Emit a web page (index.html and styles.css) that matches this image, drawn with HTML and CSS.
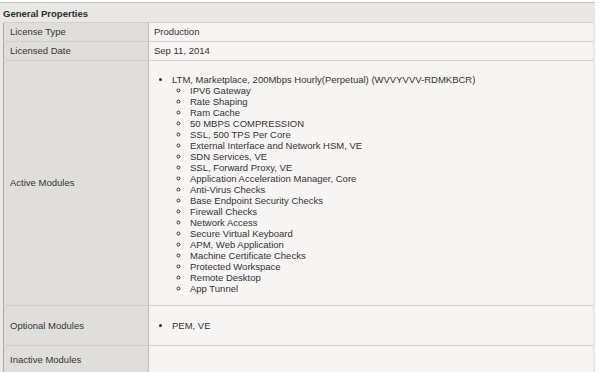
FILE: index.html
```html
<!DOCTYPE html>
<html lang="en">
  <head>
    <meta charset="UTF-8" />
    <title>General Properties</title>
    <link rel="stylesheet" href="styles.css">
  </head>
  <body>
    <div class="panel">
      <div class="panel-title">General Properties</div>
      <table class="props">
        <tr class="row-short">
          <td class="label">License Type</td>
          <td class="value">Production</td>
        </tr>
        <tr class="row-short">
          <td class="label">Licensed Date</td>
          <td class="value">Sep 11, 2014</td>
        </tr>
        <tr>
          <td class="label">Active Modules</td>
          <td class="value">
            <ul class="modules">
              <li>LTM, Marketplace, 200Mbps Hourly(Perpetual) (WVVYVVV-RDMKBCR)
                <ul>
                  <li>IPV6 Gateway</li>
                  <li>Rate Shaping</li>
                  <li>Ram Cache</li>
                  <li>50 MBPS COMPRESSION</li>
                  <li>SSL, 500 TPS Per Core</li>
                  <li>External Interface and Network HSM, VE</li>
                  <li>SDN Services, VE</li>
                  <li>SSL, Forward Proxy, VE</li>
                  <li>Application Acceleration Manager, Core</li>
                  <li>Anti-Virus Checks</li>
                  <li>Base Endpoint Security Checks</li>
                  <li>Firewall Checks</li>
                  <li>Network Access</li>
                  <li>Secure Virtual Keyboard</li>
                  <li>APM, Web Application</li>
                  <li>Machine Certificate Checks</li>
                  <li>Protected Workspace</li>
                  <li>Remote Desktop</li>
                  <li>App Tunnel</li>
                </ul>
              </li>
            </ul>
          </td>
        </tr>
        <tr>
          <td class="label">Optional Modules</td>
          <td class="value">
            <ul class="modules modules-short">
              <li>PEM, VE</li>
            </ul>
          </td>
        </tr>
        <tr class="row-tall">
          <td class="label">Inactive Modules</td>
          <td class="value"></td>
        </tr>
      </table>
    </div>
  </body>
</html>
```

FILE: styles.css
```css
* {
  padding: 0;
  margin: 0;
}

body {
  background-color: #ffffff;
  font-family: "Liberation Sans", Arial, sans-serif;
  font-size: 9.5px;
  color: #333333;
}

.panel {
  width: 595px;
  margin-top: 2px;
  border-top: 1px solid #c4c3bf;
  background-color: #e9e8e4;
}

.panel-title {
  height: 16px;
  line-height: 16px;
  padding: 3px 0 0 3px;
  font-weight: bold;
  color: #2b2b2b;
}

.props {
  margin-left: 3px;
  width: 590px;
  border-collapse: collapse;
  border-left: 1px solid #a9a8a4;
}

.props td {
  border-top: 1px solid #d0cfcb;
  border-bottom: 1px solid #d0cfcb;
  vertical-align: middle;
  line-height: 12px;
}

.props .label {
  width: 135px;
  padding: 3px 3px 3px 6px;
  background-color: #dfdedb;
  border-right: 1px solid #bdbcb8;
}

.props .value {
  padding: 3px 5px;
  background-color: #f6f5f3;
}

.row-short td {
  height: 12px;
}

.row-tall td {
  height: 22px;
}

.modules {
  margin: 10px 0 8px;
  padding-left: 18px;
  line-height: 11px;
  list-style: disc;
}

.modules-short {
  margin: 11px 0;
}

.modules ul {
  padding-left: 18px;
  list-style: circle;
}
```
